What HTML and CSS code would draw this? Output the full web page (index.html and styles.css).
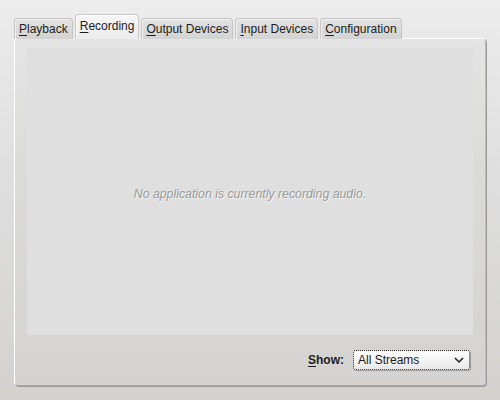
FILE: index.html
```html
<!DOCTYPE html>
<html lang="en">
<head>
    <meta charset="UTF-8">
    <title>Recording</title>
    <link rel="stylesheet" href="styles.css">
</head>
<body>
    <div class="window">
        <div class="tabs">
            <div class="tab"><u>P</u>layback</div>
            <div class="tab active"><u>R</u>ecording</div>
            <div class="tab"><u>O</u>utput Devices</div>
            <div class="tab"><u>I</u>nput Devices</div>
            <div class="tab"><u>C</u>onfiguration</div>
        </div>
        <div class="panel">
            <div class="stream-list">
                <p class="empty">No application is currently recording audio.</p>
            </div>
            <div class="footer">
                <label class="show-label" for="show"><u>S</u>how:</label>
                <div class="combo" id="show">
                    <span>All Streams</span>
                    <svg width="10" height="6" viewBox="0 0 10 6"><path d="M1 1 L5 5 L9 1" fill="none" stroke="#222" stroke-width="1.5"/></svg>
                </div>
            </div>
        </div>
    </div>
</body>
</html>
```

FILE: styles.css
```css
body {
    margin: 0;
    width: 500px;
    height: 400px;
    overflow: hidden;
    font-family: "Liberation Sans", Arial, sans-serif;
    font-size: 12px;
    color: #1c1c1c;
    background: linear-gradient(to bottom, #ececec 0%, #dedede 45%, #d3d2cf 100%);
}
.window {
    padding: 15px 14px 0 14px;
}
.tabs {
    display: flex;
    align-items: flex-end;
    gap: 2px;
    height: 24px;
    position: relative;
    z-index: 1;
}
.tab {
    height: 20px;
    line-height: 20px;
    padding: 0 4px;
    border: 1px solid #c4c4c4;
    border-bottom: none;
    border-radius: 4px 4px 0 0;
    background: linear-gradient(to bottom, #e2e2e2, #d3d3d3);
    box-shadow: inset 1px 1px 0 #f2f2f2;
}
.tab.active {
    height: 24px;
    line-height: 22px;
    padding: 0 4px;
    border-color: #c8c8c8;
    background: linear-gradient(to bottom, #f6f6f6, #ececec);
    box-shadow: inset 1px 1px 0 #ffffff;
}
u {
    text-decoration: underline;
    text-underline-offset: 2px;
}
.panel {
    height: 348px;
    margin-top: -1px;
    border: 1px solid #ffffff;
    border-right-color: #bdbdbb;
    border-bottom-color: #a9a8a6;
    border-radius: 4px;
    background: linear-gradient(to bottom, #e4e4e4 0%, #dadad8 40%, #d4d3d1 100%);
    box-shadow: 1px 1px 0 #9a9997;
    padding: 8px 12px 0 12px;
    box-sizing: border-box;
    display: flex;
    flex-direction: column;
}
.stream-list {
    height: 288px;
    background: #dfdfdf;
    display: flex;
    align-items: center;
    justify-content: center;
}
.empty {
    margin: 5px 0 0 0;
    font-style: italic;
    font-size: 12.3px;
    color: #9a9a9a;
    text-shadow: 1px 1px 0 #f4f4f4;
}
.footer {
    display: flex;
    justify-content: flex-end;
    align-items: center;
    gap: 9px;
    margin-top: 15px;
    padding-right: 3px;
}
.show-label {
    font-weight: bold;
}
.combo {
    width: 117px;
    height: 20px;
    box-sizing: border-box;
    border: 1px dotted #222;
    border-radius: 3px;
    background: linear-gradient(to bottom, #ffffff, #e8e8e8);
    box-shadow: 1px 1px 1px #9e9e9e;
    display: flex;
    align-items: center;
    justify-content: space-between;
    padding: 0 5px 0 4px;
    font-size: 12px;
}
```
